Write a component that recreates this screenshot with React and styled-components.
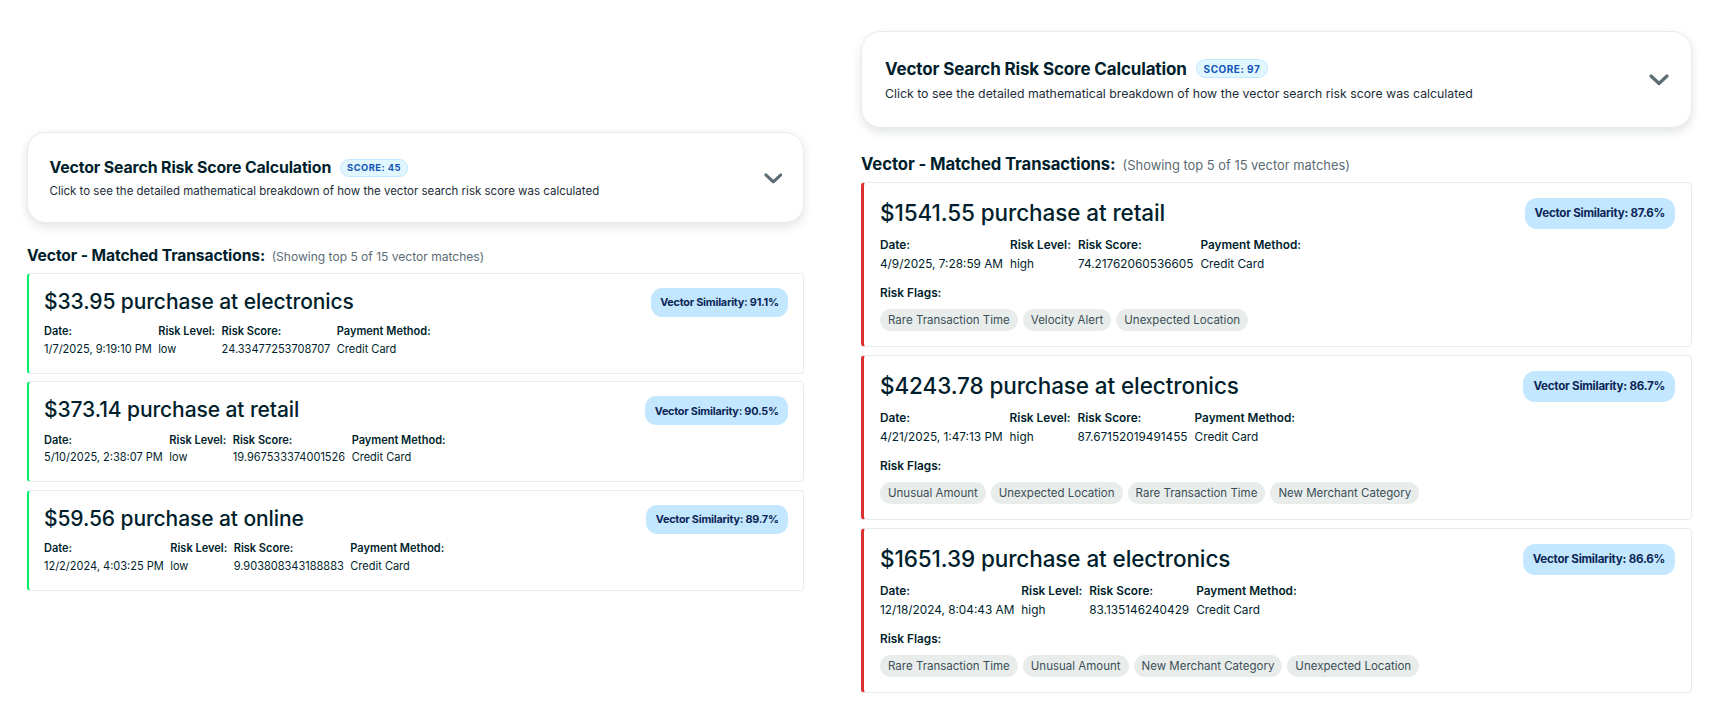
import React from 'react';
import styled, { createGlobalStyle } from 'styled-components';

const GlobalStyle = createGlobalStyle`
  html, body {
    margin: 0;
    padding: 0;
    background: #ffffff;
  }

  body {
    font-family: Inter, Lato, sans-serif;
    color: #001e2b;
  }
`;

const panels = [
  {
    scale: 0.935,
    score: 45,
    items: [
      {
        amount: '$33.95', category: 'electronics', date: '1/7/2025, 9:19:10 PM', level: 'low',
        riskScore: '24.33477253708707', method: 'Credit Card', similarity: '91.1%', flags: [],
      },
      {
        amount: '$373.14', category: 'retail', date: '5/10/2025, 2:38:07 PM', level: 'low',
        riskScore: '19.967533374001526', method: 'Credit Card', similarity: '90.5%', flags: [],
      },
      {
        amount: '$59.56', category: 'online', date: '12/2/2024, 4:03:25 PM', level: 'low',
        riskScore: '9.903808343188883', method: 'Credit Card', similarity: '89.7%', flags: [],
      },
    ],
  },
  {
    scale: 1,
    score: 97,
    items: [
      {
        amount: '$1541.55', category: 'retail', date: '4/9/2025, 7:28:59 AM', level: 'high',
        riskScore: '74.21762060536605', method: 'Credit Card', similarity: '87.6%',
        flags: ['Rare Transaction Time', 'Velocity Alert', 'Unexpected Location'],
      },
      {
        amount: '$4243.78', category: 'electronics', date: '4/21/2025, 1:47:13 PM', level: 'high',
        riskScore: '87.67152019491455', method: 'Credit Card', similarity: '86.7%',
        flags: ['Unusual Amount', 'Unexpected Location', 'Rare Transaction Time', 'New Merchant Category'],
      },
      {
        amount: '$1651.39', category: 'electronics', date: '12/18/2024, 8:04:43 AM', level: 'high',
        riskScore: '83.135146240429', method: 'Credit Card', similarity: '86.6%',
        flags: ['Rare Transaction Time', 'Unusual Amount', 'New Merchant Category', 'Unexpected Location'],
      },
    ],
  },
];

const Chevron = () => (
  <svg width="20" height="12" viewBox="0 0 20 12" fill="none">
    <path d="M2 2 L10 9.5 L18 2" stroke="#5c6c75" strokeWidth="3.2" strokeLinecap="round" strokeLinejoin="round" />
  </svg>
);

const App = () => {
  const renderItem = (item, i) => (
    <TxCard key={i} $level={item.level}>
      <TxHeader>
        <TxTitle>{item.amount} purchase at {item.category}</TxTitle>
        <SimilarityBadge>Vector Similarity: {item.similarity}</SimilarityBadge>
      </TxHeader>
      <DetailGrid>
        <DetailLabel>Date:</DetailLabel>
        <DetailLabel>Risk Level:</DetailLabel>
        <DetailLabel>Risk Score:</DetailLabel>
        <DetailLabel>Payment Method:</DetailLabel>
        <DetailValue>{item.date}</DetailValue>
        <DetailValue>{item.level}</DetailValue>
        <DetailValue>{item.riskScore}</DetailValue>
        <DetailValue>{item.method}</DetailValue>
      </DetailGrid>
      {item.flags.length > 0 && (
        <FlagsBlock>
          <DetailLabel>Risk Flags:</DetailLabel>
          <FlagRow>
            {item.flags.map((f) => <FlagChip key={f}>{f}</FlagChip>)}
          </FlagRow>
        </FlagsBlock>
      )}
    </TxCard>
  );

  return <>
    <GlobalStyle />
    <Page>
      {panels.map((p, idx) => (
        <Panel key={idx} $scale={p.scale}>
          <ScoreCard>
            <ScoreText>
              <ScoreTitleRow>
                <ScoreTitle>Vector Search Risk Score Calculation</ScoreTitle>
                <ScoreBadge>SCORE: {p.score}</ScoreBadge>
              </ScoreTitleRow>
              <ScoreSubtitle>
                Click to see the detailed mathematical breakdown of how the vector search risk score was calculated
              </ScoreSubtitle>
            </ScoreText>
            <Chevron />
          </ScoreCard>

          <MatchesHeading>
            Vector - Matched Transactions:
            <MatchesNote>(Showing top 5 of 15 vector matches)</MatchesNote>
          </MatchesHeading>

          <TxList>
            {p.items.map(renderItem)}
          </TxList>
        </Panel>
      ))}
    </Page>
  </>;
};

export default App;

const Page = styled.div`
  display: flex;
  flex-direction: row;
  align-items: center;
  justify-content: space-between;

  height: 721px;
  padding: 2px 26px 0 27px;
  box-sizing: border-box;
`;

const Panel = styled.div`
  display: flex;
  flex-direction: column;

  width: 831px;
  zoom: ${(p) => p.$scale};
`;

const ScoreCard = styled.div`
  display: flex;
  align-items: center;
  justify-content: space-between;

  padding: 26px 22px 24px 23px;

  background: #ffffff;
  border: 1px solid #e8edeb;
  border-radius: 20px;
  box-shadow: 0 4px 10px rgba(0, 30, 43, 0.12);
`;

const ScoreText = styled.div`
  display: flex;
  flex-direction: column;
  gap: 5px;
`;

const ScoreTitleRow = styled.div`
  display: flex;
  align-items: center;
  gap: 9px;
`;

const ScoreTitle = styled.div`
  font-size: 17px;
  line-height: 22px;
  font-weight: 700;
  letter-spacing: -0.15px;
  color: #001e2b;
`;

const ScoreBadge = styled.span`
  display: inline-flex;
  align-items: center;

  height: 17px;
  padding: 0 7px;

  background: #e1f7ff;
  border: 1px solid #c3e7fe;
  border-radius: 10px;

  color: #1254b7;
  font-size: 10px;
  font-weight: 700;
  letter-spacing: 0.5px;
`;

const ScoreSubtitle = styled.div`
  font-size: 12.3px;
  line-height: 18px;
  color: #1c2d38;
`;

const MatchesHeading = styled.div`
  display: flex;
  align-items: baseline;
  gap: 7px;

  margin: 26px 0 6px;

  font-size: 16.7px;
  line-height: 20px;
  font-weight: 700;
  letter-spacing: -0.1px;
  color: #001e2b;
`;

const MatchesNote = styled.span`
  font-size: 12.9px;
  font-weight: 400;
  letter-spacing: 0;
  color: #5c6c75;
`;

const TxList = styled.div`
  display: flex;
  flex-direction: column;
  gap: 8px;
`;

const TxCard = styled.div`
  display: flex;
  flex-direction: column;

  padding: 15px 16px 15px 16px;

  background: #ffffff;
  border: 1px solid #e8edeb;
  border-left: 3px solid ${(p) => (p.$level === 'high' ? '#db3030' : '#00ed64')};
  border-radius: 4px;
`;

const TxHeader = styled.div`
  display: flex;
  align-items: flex-start;
  justify-content: space-between;
`;

const TxTitle = styled.div`
  font-size: 22.5px;
  line-height: 30px;
  font-weight: 500;
  letter-spacing: -0.1px;
  color: #001e2b;
`;

const SimilarityBadge = styled.span`
  display: inline-flex;
  align-items: center;

  height: 31px;
  padding: 0 10px;

  background: #c3e7fe;
  border-radius: 12px;

  color: #0c2657;
  font-size: 11.6px;
  font-weight: 700;
  letter-spacing: -0.25px;
`;

const DetailGrid = styled.div`
  display: grid;
  grid-template-columns: repeat(4, max-content);
  column-gap: 7px;

  margin-top: 7px;
`;

const DetailLabel = styled.div`
  font-size: 11.8px;
  line-height: 19px;
  font-weight: 600;
  color: #001e2b;
`;

const DetailValue = styled.div`
  font-size: 11.8px;
  line-height: 19px;
  color: #001e2b;
`;

const FlagsBlock = styled.div`
  display: flex;
  flex-direction: column;
  gap: 6px;

  margin-top: 10px;
`;

const FlagRow = styled.div`
  display: flex;
  flex-wrap: wrap;
  gap: 5px;
`;

const FlagChip = styled.span`
  display: inline-flex;
  align-items: center;

  height: 22px;
  padding: 0 8px;

  background: #e8edeb;
  border-radius: 11px;

  color: #3d4f58;
  font-size: 11.5px;
`;
